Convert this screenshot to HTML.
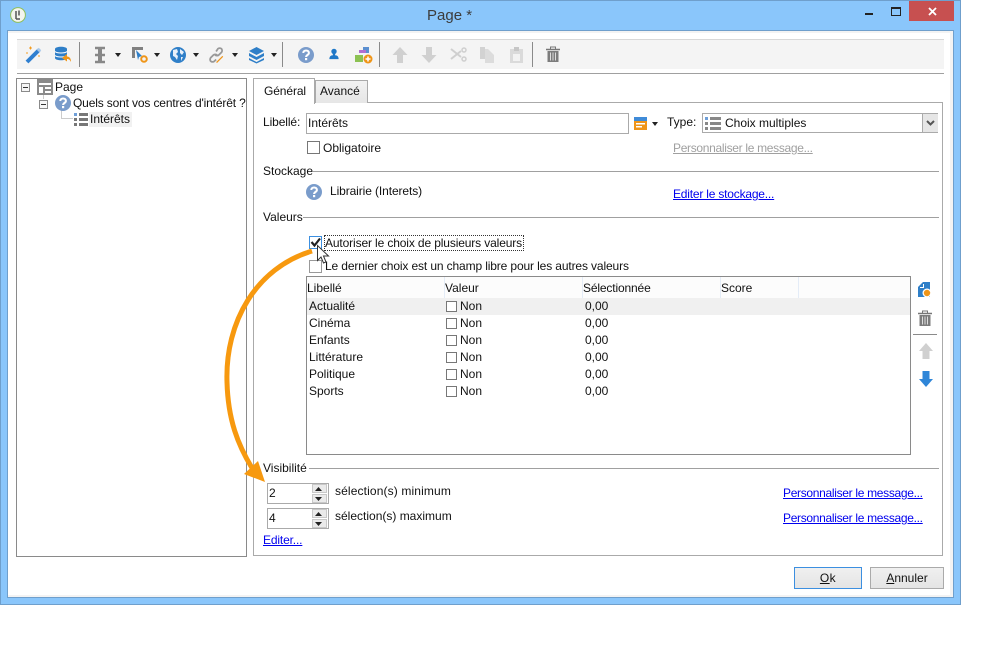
<!DOCTYPE html>
<html lang="fr"><head><meta charset="utf-8"><title>Page *</title>
<style>
html,body{margin:0;padding:0;background:#fff}
body{width:1001px;height:646px;position:relative;overflow:hidden;font-family:"Liberation Sans",sans-serif;font-size:12px;color:#111}
.a{position:absolute}
.t{position:absolute;white-space:nowrap;line-height:14px}
.l{color:#0000ee;text-decoration:underline}
.p{letter-spacing:-.31px}
.cb{position:absolute;width:11px;height:11px;border:1px solid #777;background:#fff}
.tri{position:absolute;width:0;height:0;border-left:3.5px solid transparent;border-right:3.5px solid transparent;border-top:4px solid #222}
.sep{position:absolute;width:1px;background:#8a8a8a}
.hl{position:absolute;height:1px;background:#a0a0a0}
svg{position:absolute;overflow:visible}
.n{position:absolute;width:9px;height:9px;border:1px solid #777;background:#fff}
.btn{position:absolute;height:20px;background:linear-gradient(#f0f0f0,#e4e4e4);text-align:center;line-height:20px}
.sp{position:absolute;left:44px;width:13px;height:7px;background:#eaeaea;border:1px solid #c8c8c8}
</style></head><body>

<!-- window -->
<div class="a" style="left:0;top:0;width:959px;height:603px;border:1px solid #6f9fcc;background:#8ac6fb"></div>
<div class="a" style="left:7px;top:30px;width:945px;height:566px;border:1px solid #6f9fcc;background:#f3f3f3"></div>
<div class="a" style="left:8px;top:33px;width:942px;height:562px;background:#fff"></div>

<!-- title -->
<div class="t" style="left:427px;top:7px;font-size:15px;line-height:18px;color:#3c3c3c">Page *</div>
<svg style="left:9px;top:7px" width="18" height="18" viewBox="0 0 18 18"><circle cx="9" cy="8" r="7.4" fill="#f4f4ee" stroke="#8fbf5a" stroke-width="1"/><path d="M7 4v8M10 3.500v5M7 12h4" stroke="#555" stroke-width="1.500" fill="none"/></svg>
<div class="a" style="left:865px;top:13px;width:8px;height:2px;background:#222"></div>
<div class="a" style="left:891px;top:7px;width:8px;height:6px;border:1px solid #222;border-top-width:2px"></div>
<div class="a" style="left:909px;top:1px;width:45px;height:20px;background:#c75050"></div>
<svg style="left:928px;top:7px" width="9" height="9" viewBox="0 0 9 9"><path d="M1 1l7 7M8 1l-7 7" stroke="#fff" stroke-width="1.800"/></svg>

<!-- toolbar -->
<div class="a" style="left:17px;top:39px;width:927px;height:29px;background:#f4f4f4;border-top:1px solid #d8d8d8"></div>
<div class="hl" style="left:17px;top:73px;width:927px"></div>
<div class="sep" style="left:79px;top:42px;height:25px"></div>
<div class="sep" style="left:282px;top:42px;height:25px"></div>
<div class="sep" style="left:379px;top:42px;height:25px"></div>
<div class="sep" style="left:532px;top:42px;height:25px"></div>

<!-- wand -->
<svg style="left:25px;top:46px" width="18" height="18" viewBox="0 0 18 18"><path d="M2 16L14 4" stroke="#2f7fd0" stroke-width="4"/><path d="M13 5l2-2" stroke="#a9c9ea" stroke-width="3.500"/><path d="M4 2h3M5.500 .5v3M1 7h2M13 10h2" stroke="#f39c1f" stroke-width="1"/></svg>
<!-- db -->
<svg style="left:54px;top:46px" width="18" height="18" viewBox="0 0 18 18"><path d="M1 3c0-3 12-3 12 0v9c0 3-12 3-12 0z" fill="#2f7fc8"/><path d="M1 5.500c2 2 10 2 12 0M1 9.500c2 2 10 2 12 0" stroke="#fff" stroke-width="1" fill="none"/><path d="M8 12l5-4v2.500c3 0 4 2.500 4 5.500-1-2-2-3-4-3v2.500z" fill="#ef9518"/></svg>
<!-- I beam -->
<svg style="left:93px;top:46px" width="14" height="18" viewBox="0 0 14 18"><path d="M2 2h10M2 16h10M2 9h10" stroke="#888" stroke-width="2.500"/><path d="M7 2v14" stroke="#888" stroke-width="4"/></svg>
<div class="tri" style="left:115px;top:53px"></div>
<!-- play gear -->
<svg style="left:131px;top:46px" width="18" height="18" viewBox="0 0 18 18"><path d="M1 1h11v3H4v8H1z" fill="#808080"/><path d="M5 4l6 6-3 1-1 3z" fill="#2f7fc8"/><circle cx="13" cy="13" r="2.800" fill="none" stroke="#ef9518" stroke-width="2"/></svg>
<div class="tri" style="left:154px;top:53px"></div>
<!-- globe -->
<svg style="left:169px;top:46px" width="18" height="18" viewBox="0 0 18 18"><circle cx="9" cy="9" r="8" fill="#2f7fc8"/><path d="M4 4l4-1 1 3-2 2 2 2-1 4-2-3-2-1zM11 3l4 3-2 3-2-2zM12 11l2 0-2 4z" fill="#e8f0fa"/></svg>
<div class="tri" style="left:193px;top:53px"></div>
<!-- link -->
<svg style="left:209px;top:46px" width="16" height="18" viewBox="0 0 18 18"><path d="M8 5l2-3c1-1 3-1 4 0s1 3 0 4l-3 3c-1 1-3 1-4 0M9 9c-1-1-3-1-4 0l-3 3c-1 1-1 3 0 4s3 1 4 0l2-2" fill="none" stroke="#999" stroke-width="2"/><path d="M8 17l7-7 1 1-7 7z" fill="#ef9518"/></svg>
<div class="tri" style="left:232px;top:53px"></div>
<!-- layers -->
<svg style="left:248px;top:46px" width="17" height="18" viewBox="0 0 17 18"><path d="M8.500 1L16 5l-7.500 4L1 5z" fill="#2f7fc8"/><path d="M1 7l7.500 4L16 7v3l-7.500 4L1 10zM1 12l7.500 4 7.500-4v2l-7.500 3.500L1 14z" fill="#2f7fc8"/></svg>
<div class="tri" style="left:271px;top:53px"></div>
<!-- help -->
<svg style="left:298px;top:47px" width="16" height="16" viewBox="0 0 16 16"><circle cx="8" cy="8" r="8" fill="#7a9ccb"/><path d="M5.300 6c0-3.400 5.600-3.400 5.600 0 0 2-2.800 2-2.800 4" fill="none" stroke="#fff" stroke-width="2"/><rect x="7" y="11" width="2.200" height="2.200" fill="#fff"/></svg>
<!-- user -->
<svg style="left:329px;top:47px" width="10" height="15" viewBox="0 0 13 16"><circle cx="6.500" cy="4" r="3.500" fill="#1f78c8"/><path d="M5 7h3v2c3 0 4.500 2 4.500 5H.5c0-3 1.500-5 4.500-5z" fill="#1f78c8"/></svg>
<!-- shapes -->
<svg style="left:355px;top:46px" width="17" height="18" viewBox="0 0 17 18"><rect x="0" y="9" width="8" height="7" fill="#8cc152"/><rect x="4" y="4" width="7" height="3" fill="#b26fd0"/><path d="M8 1h6v6h-3V4H8z" fill="#5b8fd0"/><circle cx="13" cy="13" r="4.500" fill="#ef9518"/><path d="M10.500 13h5M13 10.500v5" stroke="#fff" stroke-width="1.500"/></svg>
<!-- up / down -->
<svg style="left:392px;top:47px" width="16" height="16" viewBox="0 0 16 16"><path d="M8 0l7.500 8H11v8H5V8H.5z" fill="#d0d0d0"/></svg>
<svg style="left:421px;top:47px" width="16" height="16" viewBox="0 0 16 16"><path d="M8 16L.5 8H5V0h6v8h4.500z" fill="#d0d0d0"/></svg>
<!-- scissors -->
<svg style="left:450px;top:47px" width="17" height="15" viewBox="0 0 17 15"><path d="M1 2l10 8M1 12l10-8" stroke="#cfcfcf" stroke-width="2"/><circle cx="14" cy="3" r="2" fill="none" stroke="#cfcfcf" stroke-width="1.500"/><circle cx="14" cy="12" r="2" fill="none" stroke="#cfcfcf" stroke-width="1.500"/></svg>
<!-- copy -->
<svg style="left:480px;top:47px" width="15" height="16" viewBox="0 0 15 16"><path d="M0 0h5v12H0z" fill="#d2d2d2"/><path d="M5 2h3l6 6v8H5z" fill="#dcdcdc"/></svg>
<!-- paste -->
<svg style="left:510px;top:47px" width="13" height="16" viewBox="0 0 13 16"><path d="M0 2h13v14H0z" fill="#dadada"/><rect x="4" y="0" width="5" height="4" fill="#c6c6c6"/><rect x="3" y="7" width="7" height="7" fill="#f2f2f2"/></svg>
<!-- trash -->
<svg style="left:546px;top:46px" width="14" height="17" viewBox="0 0 14 17"><path d="M0 3.500h14" stroke="#777" stroke-width="1.500"/><path d="M4.500 3V1h5v2" stroke="#777" fill="none"/><path d="M1.500 5h11v11h-11z" fill="#7c7c7c"/><path d="M4.500 6.500v8M7 6.500v8M9.500 6.500v8" stroke="#ddd" stroke-width="1"/></svg>

<!-- tree -->
<div class="a" style="left:16px;top:78px;width:229px;height:477px;border:1px solid #8a8a8a;background:#fff"></div>
<div class="a" style="left:43px;top:93px;width:1px;height:6px;background:#ccc"></div>
<div class="a" style="left:61px;top:110px;width:1px;height:9px;background:#ccc"></div>
<div class="a" style="left:61px;top:118px;width:12px;height:1px;background:#ccc"></div>
<svg style="left:21px;top:83px" width="9" height="9" viewBox="0 0 9 9"><rect x=".5" y=".5" width="8" height="8" fill="#f6f6f6" stroke="#8a8a8a"/><path d="M2 4.500h5" stroke="#333"/></svg>
<svg style="left:39px;top:100px" width="9" height="9" viewBox="0 0 9 9"><rect x=".5" y=".5" width="8" height="8" fill="#f6f6f6" stroke="#8a8a8a"/><path d="M2 4.500h5" stroke="#333"/></svg>
<svg style="left:37px;top:79px" width="16" height="16" viewBox="0 0 16 16"><rect width="16" height="16" fill="#8a8a8a"/><rect x="2" y="4" width="12" height="2" fill="#fff"/><rect x="2" y="8" width="4" height="6" fill="#fff"/><rect x="8" y="8" width="6" height="2" fill="#fff"/><rect x="8" y="12" width="6" height="2" fill="#fff"/></svg>
<div class="t" style="left:55px;top:80px">Page</div>
<svg style="left:55px;top:95px" width="16" height="16" viewBox="0 0 16 16"><circle cx="8" cy="8" r="8" fill="#7a9ccb"/><path d="M5.300 6c0-3.400 5.600-3.400 5.600 0 0 2-2.800 2-2.800 4" fill="none" stroke="#fff" stroke-width="2"/><rect x="7" y="11" width="2.200" height="2.200" fill="#fff"/></svg>
<div class="t" style="left:73px;top:96px;letter-spacing:-.15px">Quels sont vos centres d'intérêt ?</div>
<div class="a" style="left:89px;top:112px;width:43px;height:15px;background:#f1f1f1"></div>
<svg style="left:74px;top:113px" width="14" height="13" viewBox="0 0 14 13"><rect x="0" y="0" width="3" height="3" fill="#6f9fd8"/><rect x="5" y="0" width="9" height="3" fill="#777"/><rect x="0" y="5" width="3" height="3" fill="#777"/><rect x="5" y="5" width="9" height="3" fill="#777"/><rect x="0" y="10" width="3" height="3" fill="#777"/><rect x="5" y="10" width="9" height="3" fill="#777"/></svg>
<div class="t" style="left:90px;top:112px">Intérêts</div>

<!-- tabs -->
<div class="a" style="left:253px;top:102px;width:688px;height:452px;border:1px solid #aaa;background:#fff"></div>
<div class="a" style="left:315px;top:80px;width:51px;height:22px;border:1px solid #aaa;border-bottom:none;background:linear-gradient(#f2f2f2,#e6e6e6)"></div>
<div class="a" style="left:253px;top:78px;width:60px;height:25px;border:1px solid #aaa;border-bottom:none;background:#fff"></div>
<div class="t" style="left:264px;top:84px;letter-spacing:-.1px">Général</div>
<div class="t" style="left:320px;top:84px">Avancé</div>

<!-- Libellé row -->
<div class="t" style="left:263px;top:115px;letter-spacing:-.1px">Libellé:</div>
<div class="a" style="left:306px;top:113px;width:321px;height:19px;border:1px solid #aaa;background:#fff"></div>
<div class="t" style="left:308px;top:116px">Intérêts</div>
<svg style="left:634px;top:117px" width="13" height="13" viewBox="0 0 13 13"><rect width="13" height="4" fill="#3f8bd8"/><rect y="4" width="13" height="9" fill="#ef9518"/><rect x="2" y="6" width="9" height="1.500" fill="#fff"/><rect x="2" y="9" width="6" height="1.500" fill="#fff"/></svg>
<div class="tri" style="left:652px;top:122px"></div>
<div class="t" style="left:667px;top:115px">Type:</div>
<div class="a" style="left:702px;top:113px;width:234px;height:18px;border:1px solid #aaa;background:#fff"></div>
<div class="a" style="left:922px;top:114px;width:15px;height:18px;background:#e6e6e6;border-left:1px solid #aaa"></div>
<svg style="left:926px;top:120px" width="9" height="6" viewBox="0 0 9 6"><path d="M1 1l3.500 3.500L8 1" fill="none" stroke="#555" stroke-width="2"/></svg>
<svg style="left:705px;top:117px" width="16" height="13" viewBox="0 0 16 13"><rect x="0" y="0" width="3" height="3" fill="#6f9fd8"/><rect x="5" y="0" width="11" height="3" fill="#888"/><rect x="0" y="5" width="3" height="3" fill="#888"/><rect x="5" y="5" width="11" height="3" fill="#888"/><rect x="0" y="10" width="3" height="3" fill="#888"/><rect x="5" y="10" width="11" height="3" fill="#888"/></svg>
<div class="t" style="left:725px;top:116px">Choix multiples</div>

<div class="cb" style="left:307px;top:141px"></div>
<div class="t" style="left:323px;top:141px">Obligatoire</div>
<div class="t p" style="left:673px;top:141px;color:#a0a0a0;text-decoration:underline">Personnaliser le message...</div>

<!-- Stockage -->
<div class="t" style="left:263px;top:164px">Stockage</div>
<div class="hl" style="left:313px;top:171px;width:626px"></div>
<svg style="left:306px;top:184px" width="16" height="16" viewBox="0 0 16 16"><circle cx="8" cy="8" r="8" fill="#7a9ccb"/><path d="M5.300 6c0-3.400 5.600-3.400 5.600 0 0 2-2.800 2-2.800 4" fill="none" stroke="#fff" stroke-width="2"/><rect x="7" y="11" width="2.200" height="2.200" fill="#fff"/></svg>
<div class="t" style="left:330px;top:184px;letter-spacing:-.1px">Librairie (Interets)</div>
<div class="t l" style="left:673px;top:187px;letter-spacing:-.2px">Editer le stockage...</div>

<!-- Valeurs -->
<div class="t" style="left:263px;top:210px">Valeurs</div>
<div class="hl" style="left:303px;top:217px;width:636px"></div>
<div class="a" style="left:309px;top:236px;width:11px;height:11px;border:1px solid #3c8fe0;background:#fff"></div>
<div class="a" style="left:324px;top:235px;width:198px;height:14px;border:1px dotted #333"></div>
<div class="t" style="left:325px;top:236px;letter-spacing:-.13px">Autoriser le choix de plusieurs valeurs</div>
<div class="cb" style="left:309px;top:260px;border-color:#999"></div>
<div class="t" style="left:325px;top:259px;letter-spacing:-.13px">Le dernier choix est un champ libre pour les autres valeurs</div>

<!-- table -->
<div class="a" style="left:306px;top:276px;width:603px;height:177px;border:1px solid #8a8a8a;background:#fff"></div>
<div class="a" style="left:307px;top:277px;width:603px;height:21px;background:#fcfcfc"></div>
<div class="a" style="left:307px;top:298px;width:603px;height:17px;background:#f0f0f0"></div>
<div class="a" style="left:444px;top:277px;width:1px;height:21px;background:#e4ecf7"></div>
<div class="a" style="left:582px;top:277px;width:1px;height:21px;background:#e4ecf7"></div>
<div class="a" style="left:720px;top:277px;width:1px;height:21px;background:#e4ecf7"></div>
<div class="a" style="left:798px;top:277px;width:1px;height:21px;background:#e4ecf7"></div>
<div class="t" style="left:307px;top:281px">Libellé</div>
<div class="t" style="left:445px;top:281px">Valeur</div>
<div class="t" style="left:583px;top:281px;letter-spacing:-.15px">Sélectionnée</div>
<div class="t" style="left:721px;top:281px">Score</div>

<div class="t" style="left:309px;top:299px">Actualité</div><div class="n" style="left:446px;top:301px"></div><div class="t" style="left:460px;top:299px">Non</div><div class="t" style="left:585px;top:299px">0,00</div>
<div class="t" style="left:309px;top:316px">Cinéma</div><div class="n" style="left:446px;top:318px"></div><div class="t" style="left:460px;top:316px">Non</div><div class="t" style="left:585px;top:316px">0,00</div>
<div class="t" style="left:309px;top:333px">Enfants</div><div class="n" style="left:446px;top:335px"></div><div class="t" style="left:460px;top:333px">Non</div><div class="t" style="left:585px;top:333px">0,00</div>
<div class="t" style="left:309px;top:350px">Littérature</div><div class="n" style="left:446px;top:352px"></div><div class="t" style="left:460px;top:350px">Non</div><div class="t" style="left:585px;top:350px">0,00</div>
<div class="t" style="left:309px;top:367px">Politique</div><div class="n" style="left:446px;top:369px"></div><div class="t" style="left:460px;top:367px">Non</div><div class="t" style="left:585px;top:367px">0,00</div>
<div class="t" style="left:309px;top:384px">Sports</div><div class="n" style="left:446px;top:386px"></div><div class="t" style="left:460px;top:384px">Non</div><div class="t" style="left:585px;top:384px">0,00</div>

<!-- side icons -->
<svg style="left:918px;top:282px" width="14" height="16" viewBox="0 0 14 16"><path d="M0 5L5 0h7v15H0z" fill="#2f7fc8"/><path d="M2 5.500h3.500V2" fill="none" stroke="#fff" stroke-width="1"/><circle cx="9" cy="11" r="4.500" fill="#fff"/><circle cx="9" cy="11" r="3.200" fill="#ef9518"/></svg>
<svg style="left:918px;top:310px" width="14" height="17" viewBox="0 0 14 17"><path d="M0 3.500h14" stroke="#777" stroke-width="1.500"/><path d="M4.500 3V1h5v2" stroke="#777" fill="none"/><path d="M1.500 5h11v11h-11z" fill="#7c7c7c"/><path d="M4.500 6.500v8M7 6.500v8M9.500 6.500v8" stroke="#ddd" stroke-width="1"/></svg>
<div class="a" style="left:913px;top:334px;width:24px;height:1px;background:#8a8a8a"></div>
<svg style="left:919px;top:343px" width="14" height="16" viewBox="0 0 14 16"><path d="M7 0l7 8h-3.500v8h-7V8H0z" fill="#d0d0d0"/></svg>
<svg style="left:919px;top:371px" width="14" height="16" viewBox="0 0 14 16"><path d="M7 16L0 8h3.500V0h7v8H14z" fill="#2f86d8"/></svg>

<!-- Visibilité -->
<div class="t" style="left:263px;top:461px">Visibilité</div>
<div class="hl" style="left:309px;top:468px;width:630px"></div>

<div class="a" style="left:267px;top:483px;width:60px;height:19px;border:1px solid #aaa;background:#fff">
  <div class="sp" style="top:0"></div><div class="sp" style="top:10px"></div>
  <svg style="left:47px;top:3px" width="7" height="4" viewBox="0 0 7 4"><path d="M3.500 0L7 4H0z" fill="#222"/></svg>
  <svg style="left:47px;top:13px" width="7" height="4" viewBox="0 0 7 4"><path d="M3.500 4L0 0h7z" fill="#222"/></svg>
</div>
<div class="t" style="left:269px;top:486px">2</div>
<div class="t" style="left:335px;top:484px;letter-spacing:.13px">sélection(s) minimum</div>
<div class="a" style="left:267px;top:508px;width:60px;height:19px;border:1px solid #aaa;background:#fff">
  <div class="sp" style="top:0"></div><div class="sp" style="top:10px"></div>
  <svg style="left:47px;top:3px" width="7" height="4" viewBox="0 0 7 4"><path d="M3.500 0L7 4H0z" fill="#222"/></svg>
  <svg style="left:47px;top:13px" width="7" height="4" viewBox="0 0 7 4"><path d="M3.500 4L0 0h7z" fill="#222"/></svg>
</div>
<div class="t" style="left:269px;top:511px">4</div>
<div class="t" style="left:335px;top:509px">sélection(s) maximum</div>
<div class="t l" style="left:263px;top:533px;letter-spacing:-.15px">Editer...</div>
<div class="t l p" style="left:783px;top:486px">Personnaliser le message...</div>
<div class="t l p" style="left:783px;top:511px">Personnaliser le message...</div>

<!-- buttons -->
<div class="btn" style="left:794px;top:567px;width:66px;border:1px solid #3c8fe0;letter-spacing:.4px"><u>O</u>k</div>
<div class="btn" style="left:870px;top:567px;width:72px;border:1px solid #aaa"><u>A</u>nnuler</div>

<!-- orange arrow -->
<svg style="left:0;top:0" width="1001" height="646" viewBox="0 0 1001 646"><path d="M312 251C256 268 225 322 227 382C228 420 238 445 252 468" fill="none" stroke="#f7990f" stroke-width="5"/><path d="M265 482L244 474L258 461z" fill="#f7990f"/></svg>

<!-- check and cursor -->
<svg style="left:310px;top:237px" width="12" height="11" viewBox="0 0 12 11"><path d="M1.500 5l3 3.500L10 1.500" fill="none" stroke="#222" stroke-width="2.200"/></svg>
<svg style="left:317px;top:245px" width="13" height="19" viewBox="0 0 13 19"><path d="M.5 .5v15l3.500-3.500 2.500 6 2.500-1-2.500-6h5z" fill="#fff" stroke="#333" stroke-width="1"/></svg>

</body></html>
